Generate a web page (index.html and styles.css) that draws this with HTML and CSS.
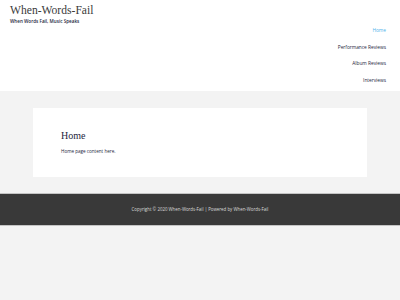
FILE: index.html
```html
<!DOCTYPE html>
<html lang="en">
<head>
    <meta charset="UTF-8">
    <meta name="viewport" content="width=device-width, initial-scale=1.0">
    <title>When-Words-Fail</title>
    <link rel="stylesheet" href="styles.css">
</head>
<body>
    <header class="site-header">
        <div class="branding">
            <div class="site-title">When-Words-Fail</div>
            <div class="site-tagline">When Words Fail, Music Speaks</div>
        </div>
        <nav class="main-nav">
            <a href="#" class="current">Home</a>
            <a href="#">Performance Reviews</a>
            <a href="#">Album Reviews</a>
            <a href="#">Interviews</a>
        </nav>
    </header>

    <main class="site-content">
        <article class="page-card">
            <h1>Home</h1>
            <p>Home page content here.</p>
        </article>
    </main>

    <footer class="site-footer">
        Copyright &copy; 2020 When-Words-Fail | Powered by When-Words-Fail
    </footer>
</body>
</html>
```

FILE: styles.css
```css
html, body {
    margin: 0;
    padding: 0;
    background-color: #f3f3f3;
    font-family: "Open Sans", Arial, sans-serif;
}
.site-header {
    display: flex;
    justify-content: space-between;
    align-items: flex-start;
    background-color: #ffffff;
    height: 91px;
    padding: 0 14px 0 10px;
    box-sizing: border-box;
}
.branding {
    padding-top: 4px;
}
.site-title {
    font-family: "Liberation Serif", "DejaVu Serif", serif;
    font-size: 11.6px;
    line-height: 14px;
    color: #3a3a3a;
}
.site-tagline {
    font-size: 4.6px;
    line-height: 6px;
    color: #23263d;
    font-weight: 600;
}
.main-nav {
    display: flex;
    flex-direction: column;
    align-items: flex-end;
    padding-top: 22px;
}
.main-nav a {
    font-size: 4.8px;
    line-height: 16.6px;
    color: #23263d;
    text-decoration: none;
}
.main-nav a.current {
    color: #4fb2ea;
}
.site-content {
    padding: 17px 33px 16px;
}
.page-card {
    background-color: #ffffff;
    height: 69px;
    padding: 22px 28px 0;
    box-sizing: border-box;
}
.page-card h1 {
    margin: 0;
    font-family: "Liberation Serif", "DejaVu Serif", serif;
    font-weight: normal;
    font-size: 10px;
    line-height: 12px;
    color: #23263d;
}
.page-card p {
    margin: 6px 0 0;
    font-size: 4.6px;
    line-height: 6px;
    color: #23263d;
}
.site-footer {
    background-color: #393939;
    border-top: 1px solid #c4c4c4;
    border-bottom: 1px solid #c4c4c4;
    height: 31px;
    color: #d9d9d9;
    font-size: 4.4px;
    line-height: 31px;
    text-align: center;
}
```
